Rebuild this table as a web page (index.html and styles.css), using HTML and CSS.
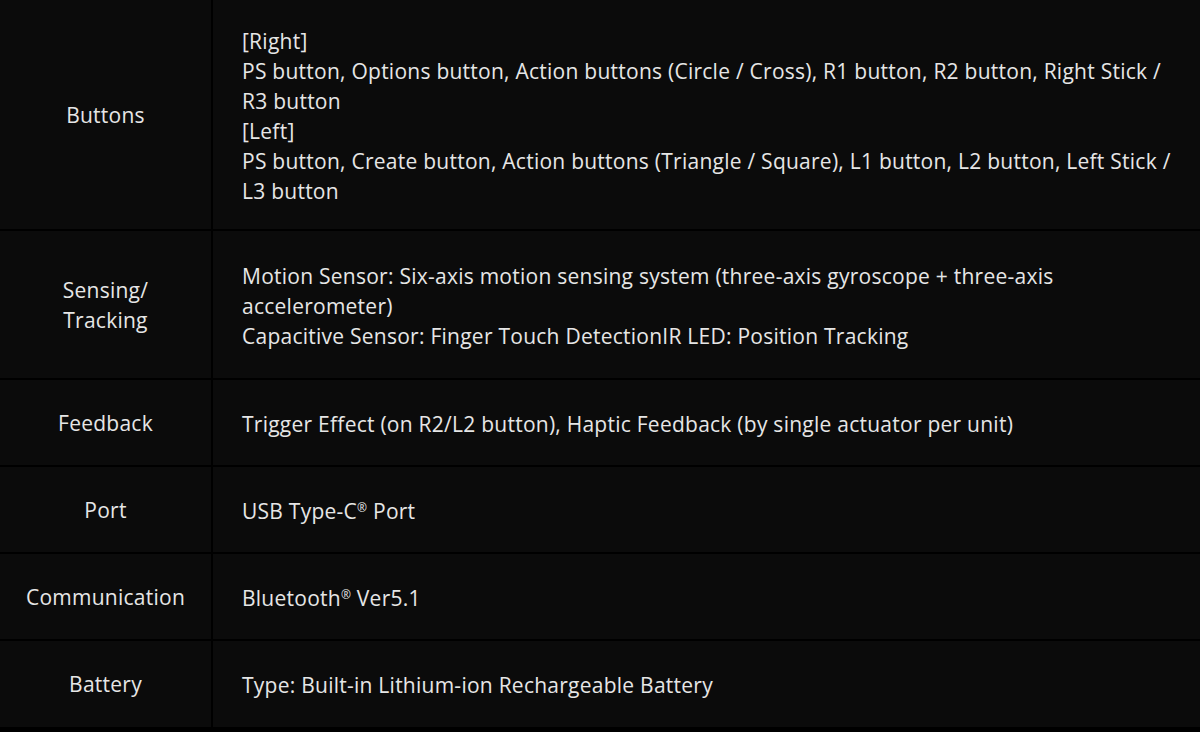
FILE: index.html
```html
<!DOCTYPE html>
<html lang="en">

<head>
    <meta charset="UTF-8">
    <meta name="viewport" content="width=device-width, initial-scale=1.0">
    <title>Specifications</title>
    <link rel="stylesheet" href="styles.css">
</head>

<body>
    <div class="spec">
        <div class="spec-label"><p>Buttons</p></div>
        <div class="spec-value">
            <p>
                [Right]<br>
                PS button, Options button, Action buttons (Circle / Cross), R1 button, R2 button, Right Stick / R3 button<br>
                [Left]<br>
                PS button, Create button, Action buttons (Triangle / Square), L1 button, L2 button, Left Stick / L3 button
            </p>
        </div>

        <div class="spec-label"><p>Sensing/<br>Tracking</p></div>
        <div class="spec-value">
            <p>
                Motion Sensor: Six-axis motion sensing system (three-axis gyroscope + three-axis accelerometer)<br>
                Capacitive Sensor: Finger Touch DetectionIR LED: Position Tracking
            </p>
        </div>

        <div class="spec-label"><p>Feedback</p></div>
        <div class="spec-value"><p>Trigger Effect (on R2/L2 button), Haptic Feedback (by single actuator per unit)</p></div>

        <div class="spec-label"><p>Port</p></div>
        <div class="spec-value"><p>USB Type-C<sup>®</sup> Port</p></div>

        <div class="spec-label"><p>Communication</p></div>
        <div class="spec-value"><p>Bluetooth<sup>®</sup> Ver5.1</p></div>

        <div class="spec-label"><p>Battery</p></div>
        <div class="spec-value"><p>Type: Built-in Lithium-ion Rechargeable Battery</p></div>
    </div>
</body>
</html>
```

FILE: styles.css
```css
html,
body {
    margin: 0;
    padding: 0;
    background-color: #000;
}

body {
    font-family: "Open Sans", "Noto Sans", sans-serif;
    font-size: 21px;
    letter-spacing: 0.25px;
    line-height: 30px;
    color: #e6e6e6;
}

.spec {
    display: grid;
    grid-template-columns: 211px 1fr;
    grid-template-rows: 229px 147px 85px 85px 85px 86px;
    gap: 2px;
    height: 732px;
    align-content: start;
}

.spec-label,
.spec-value {
    background-color: #0b0b0b;
    display: flex;
    align-items: center;
}

.spec p {
    margin: 0;
    width: 100%;
}

.spec-label {
    text-align: center;
    padding: 0 10px;
}

.spec-value {
    padding: 2px 26px 0 29px;
}

sup {
    font-size: 12px;
    line-height: 0;
    vertical-align: 7px;
}
```
